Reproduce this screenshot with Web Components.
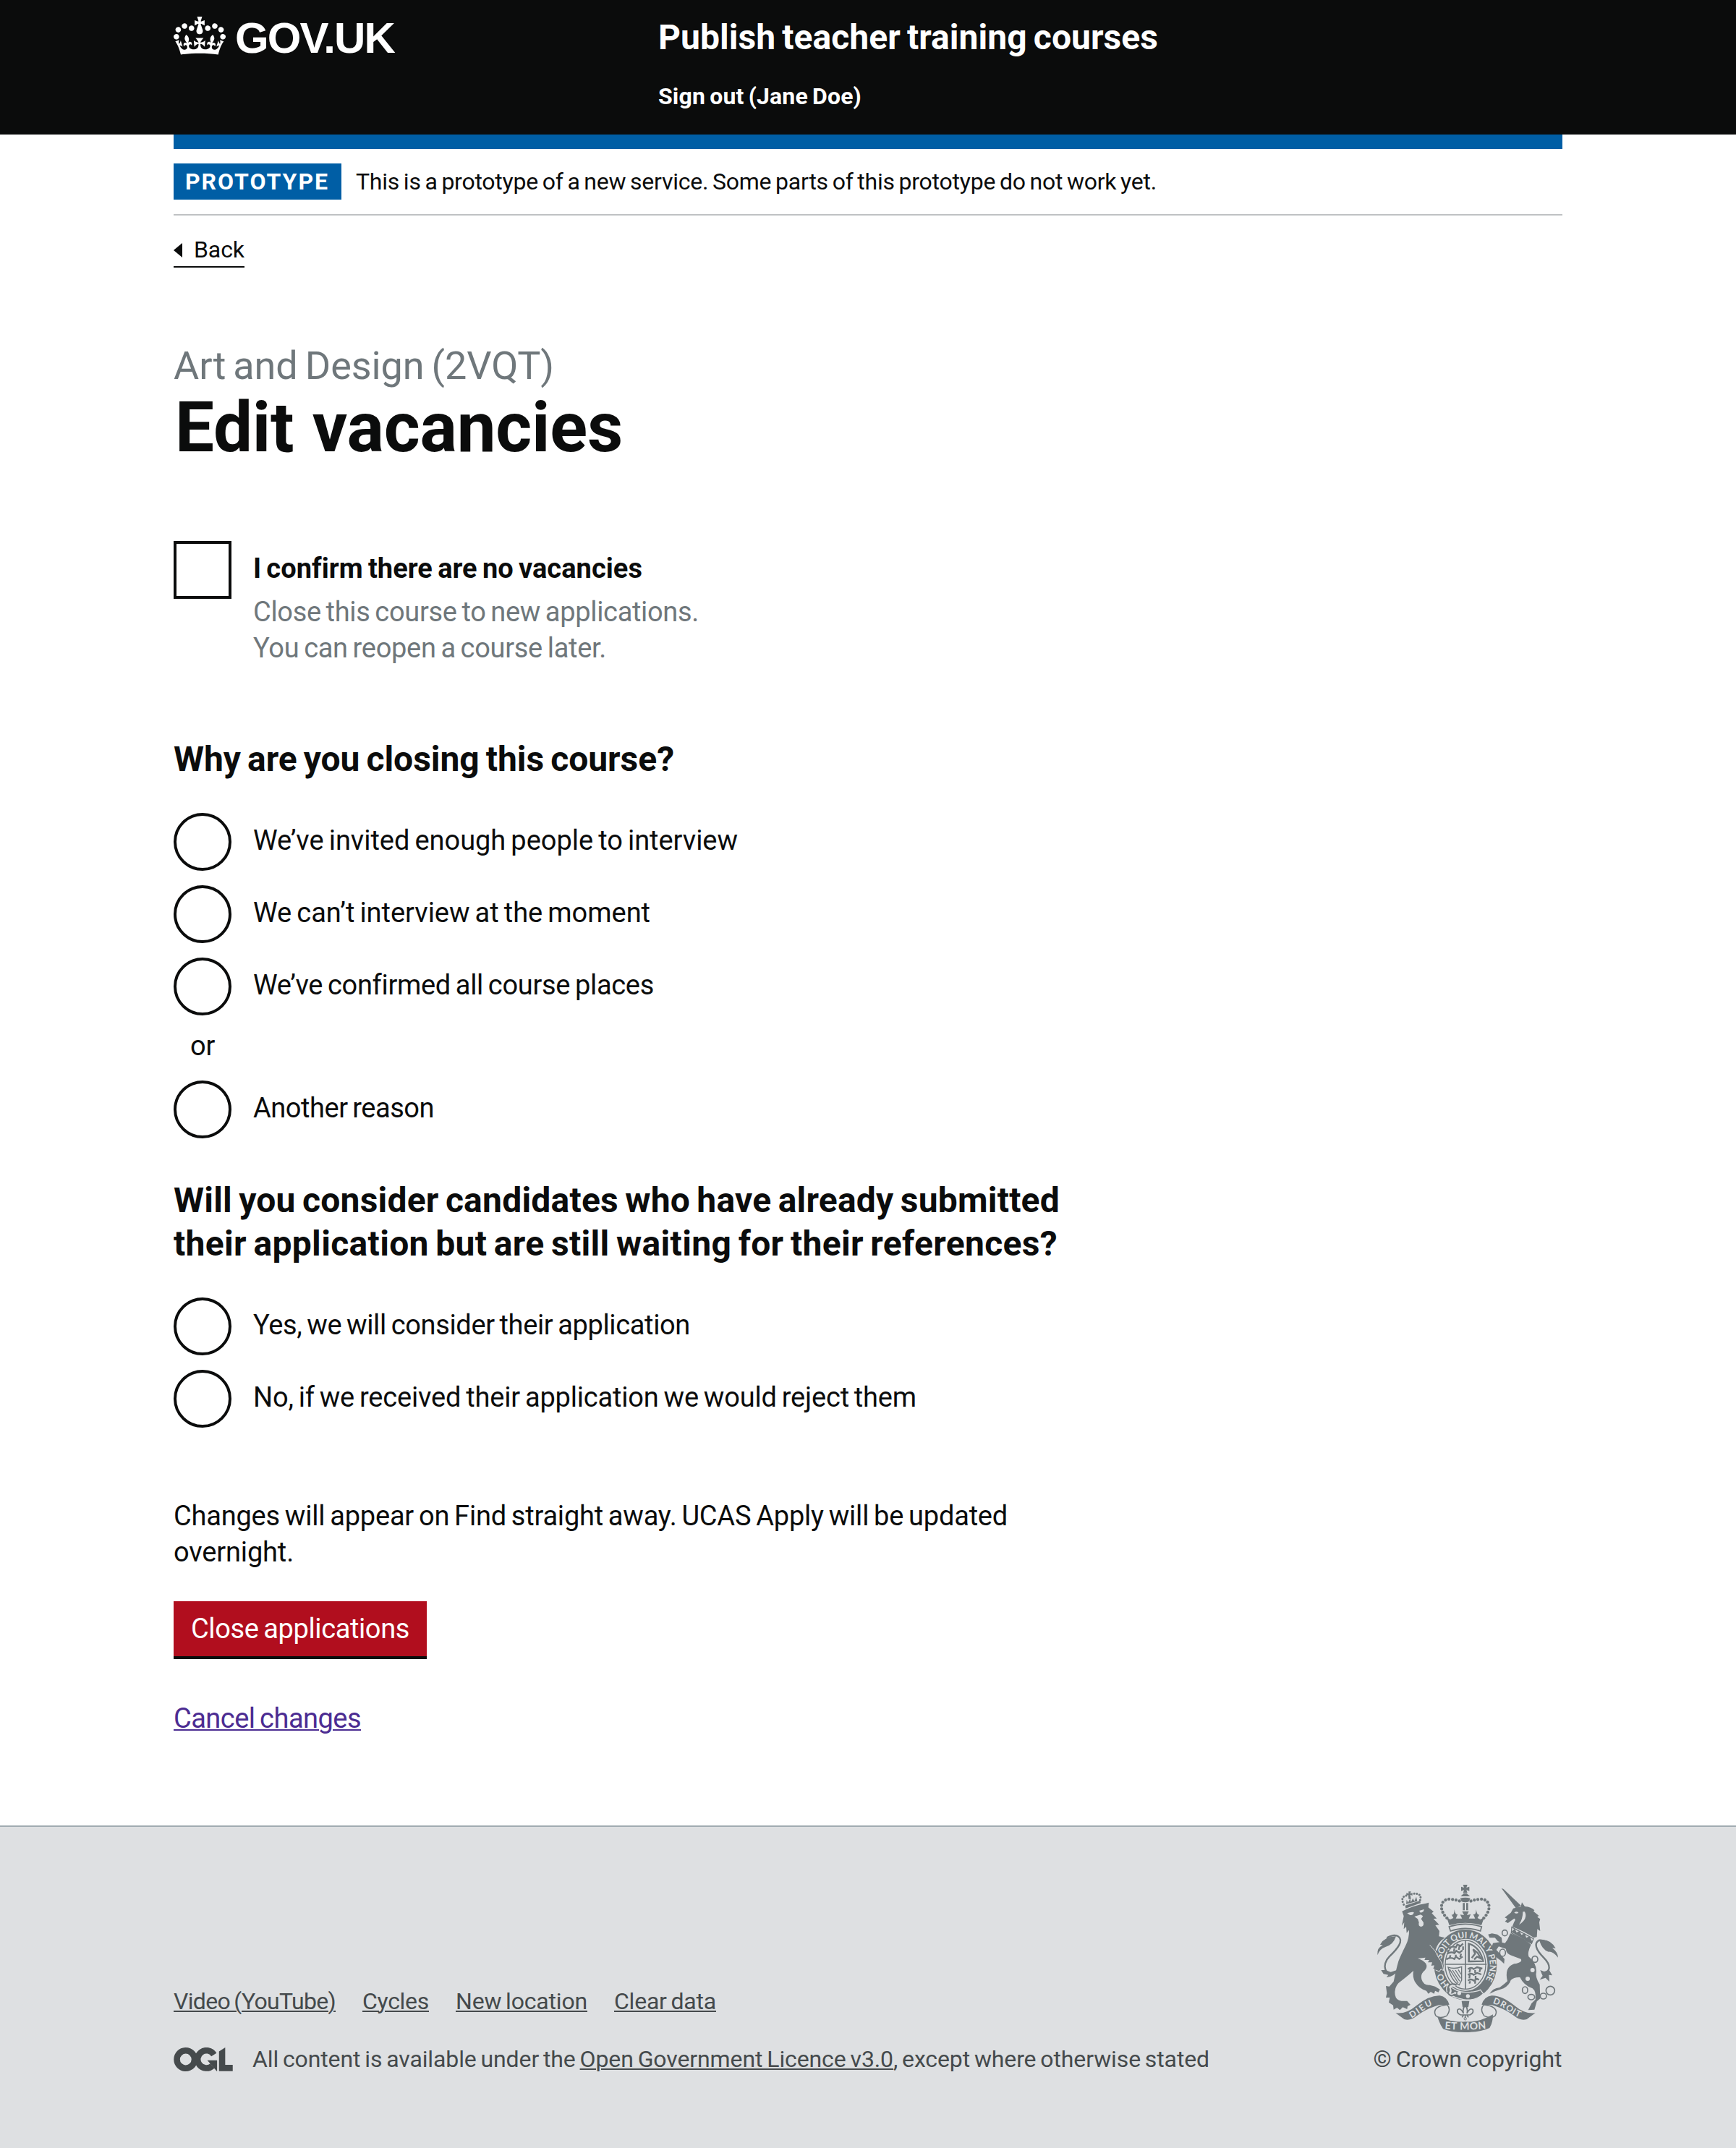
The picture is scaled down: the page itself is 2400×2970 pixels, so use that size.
<!DOCTYPE html>
<html lang="en">
<head>
<meta charset="utf-8">
<title>Edit vacancies</title>
<style>
html,body{margin:0;padding:0;background:#fff}
body{font-family:Roboto,"Liberation Sans",sans-serif;color:#0b0c0c;font-size:38px;line-height:50px}
</style>
</head>
<body>
<gv-page>
  <gv-header slot="header" service="Publish teacher training courses" user="Sign out (Jane Doe)"></gv-header>
  <gv-phase slot="main"></gv-phase>
  <gv-back slot="main"></gv-back>
  <gv-title slot="main"></gv-title>
  <gv-choice slot="main" class="check" kind="checkbox">
    <fit-text w="538" style="font-weight:700">I confirm there are no vacancies</fit-text>
    <fit-text slot="hint" w="616">Close this course to new applications.</fit-text>
    <fit-text slot="hint" w="488">You can reopen a course later.</fit-text>
  </gv-choice>
  <gv-question slot="main" style="margin-top:99px">
    <fit-text slot="legend" w="692">Why are you closing this course?</fit-text>
    <gv-choice><fit-text w="670">We’ve invited enough people to interview</fit-text></gv-choice>
    <gv-choice><fit-text w="549">We can’t interview at the moment</fit-text></gv-choice>
    <gv-choice><fit-text w="554">We’ve confirmed all course places</fit-text></gv-choice>
    <gv-divider><fit-text w="34">or</fit-text></gv-divider>
    <gv-choice><fit-text w="250">Another reason</fit-text></gv-choice>
  </gv-question>
  <gv-question slot="main" style="margin-top:56px">
    <fit-text slot="legend" w="1225">Will you consider candidates who have already submitted</fit-text>
    <fit-text slot="legend" w="1222">their application but are still waiting for their references?</fit-text>
    <gv-choice><fit-text w="604">Yes, we will consider their application</fit-text></gv-choice>
    <gv-choice><fit-text w="917">No, if we received their application we would reject them</fit-text></gv-choice>
  </gv-question>
  <gv-actions slot="main">
    <fit-text slot="note" w="1153">Changes will appear on Find straight away. UCAS Apply will be updated</fit-text>
    <fit-text slot="note" w="166">overnight.</fit-text>
    <fit-text slot="button" w="302">Close applications</fit-text>
    <fit-text slot="cancel" w="259">Cancel changes</fit-text>
  </gv-actions>
  <gv-footer slot="footer"></gv-footer>
</gv-page>
<script>
const define=(name,html,setup)=>customElements.define(name,class extends HTMLElement{
  connectedCallback(){
    if(this.shadowRoot)return;
    this.attachShadow({mode:'open'}).innerHTML=html;
    if(setup)setup(this,this.shadowRoot);
  }
});

define('gv-page',`<style>:host{display:block;background:#fff}main{padding:0 240px}</style>
<slot name="header"></slot><main><slot name="main"></slot></main><slot name="footer"></slot>`);

define('gv-header',`<style>
:host{display:flex;box-sizing:border-box;height:186px;background:#0b0c0c;color:#fff;padding:0 240px;font-weight:700}
.logo{display:flex;width:670px;flex:none}
svg{width:72px;height:53px;margin-top:23px;fill:#fff}
.word{font:700 60px/60px "Liberation Sans",Arial,sans-serif;margin:23px 0 0 13px}
.svc{font-size:48px;line-height:60px;padding-top:22px}
.user{font-size:32px;line-height:40px;margin-top:31px}
</style>
<div class="logo"><svg viewBox="0 0 132 97"><path d="M25 30.2c3.5 1.5 7.7-.2 9.1-3.7 1.5-3.6-.2-7.8-3.9-9.2-3.6-1.4-7.6.3-9.1 3.9-1.4 3.5.3 7.5 3.9 9zM9 39.5c3.6 1.5 7.8-.2 9.2-3.7 1.5-3.6-.2-7.8-3.9-9.1-3.6-1.5-7.6.2-9.1 3.8-1.4 3.5.3 7.5 3.8 9zM4.4 57.2c3.5 1.5 7.7-.2 9.1-3.8 1.5-3.6-.2-7.7-3.9-9.1-3.5-1.5-7.6.3-9.1 3.8-1.4 3.5.3 7.6 3.9 9.1zm38.3-21.4c3.5 1.5 7.7-.2 9.1-3.8 1.5-3.6-.2-7.7-3.9-9.1-3.6-1.5-7.6.3-9.1 3.8-1.3 3.6.4 7.7 3.9 9.1zm64.4-5.6c-3.6 1.5-7.8-.2-9.1-3.7-1.5-3.6.2-7.8 3.8-9.2 3.6-1.4 7.7.3 9.2 3.9 1.3 3.5-.4 7.5-3.9 9zm15.9 9.3c-3.6 1.5-7.7-.2-9.1-3.7-1.5-3.6.2-7.8 3.7-9.1 3.6-1.5 7.7.2 9.2 3.8 1.5 3.5-.3 7.5-3.8 9zm4.7 17.7c-3.6 1.5-7.8-.2-9.2-3.8-1.5-3.6.2-7.7 3.9-9.1 3.6-1.5 7.7.3 9.2 3.8 1.3 3.5-.4 7.6-3.9 9.1zM89.3 35.8c-3.6 1.5-7.8-.2-9.2-3.8-1.4-3.6.2-7.7 3.9-9.1 3.6-1.5 7.7.3 9.2 3.8 1.4 3.6-.3 7.7-3.9 9.1zM69.7 17.7l8.9 4.7V9.3l-8.9 2.8c-.2-.3-.5-.6-.9-.9L72.4 0H59.6l3.5 11.2c-.3.3-.6.5-.9.9l-8.8-2.8v13.1l8.8-4.7c.3.3.6.7.9.9l-5 15.4v.1c-.2.8-.4 1.6-.4 2.4 0 4.1 3.1 7.5 7 8.1h.2c.3 0 .7.1 1 .1.4 0 .7 0 1-.1h.2c4-.6 7.1-4.1 7.1-8.1 0-.8-.1-1.7-.4-2.4V34l-5.1-15.4c.4-.2.7-.6 1-.9zM66 92.8c16.9 0 32.8 1.1 47.1 3.2 4-16.9 8.9-26.7 14-33.5l-9.6-3.4c1 4.9 1.1 7.2 0 10.2-1.5-1.4-3-4.3-4.2-8.7L108.6 76c2.8-2 5-3.2 7.5-3.3-4.4 9.4-10 11.9-13.6 11.2-4.3-.8-6.3-4.6-5.6-7.9 1-4.7 5.7-5.9 8-.5 4.3-8.7-3-11.4-7.6-8.8 7.1-7.2 7.9-13.5 2.1-21.1-8 6.1-8.1 12.3-4.5 20.8-4.7-5.4-12.1-2.5-9.5 6.2 3.4-5.2 7.9-2 7.2 3.1-.6 4.3-6.4 7.8-13.5 7.2-10.3-.9-10.9-8-11.2-13.8 2.5-.5 7.1 1.8 11 7.3L80.2 60c-4.1 4.4-8 5.3-12.3 5.4 1.4-4.4 8-11.6 8-11.6H55.5s6.4 7.2 7.9 11.6c-4.2-.1-8-1-12.3-5.4l1.4 16.4c3.9-5.5 8.5-7.7 10.9-7.3-.3 5.8-.9 12.8-11.1 13.8-7.2.6-12.9-2.9-13.5-7.2-.7-5 3.8-8.3 7.1-3.1 2.7-8.7-4.6-11.6-9.4-6.2 3.7-8.5 3.6-14.7-4.6-20.8-5.8 7.6-5 13.9 2.2 21.1-4.7-2.6-11.9.1-7.7 8.8 2.3-5.5 7.1-4.2 8.1.5.7 3.3-1.3 7.1-5.7 7.9-3.5.7-9-1.8-13.5-11.2 2.5.1 4.7 1.3 7.5 3.3l-4.7-15.4c-1.2 4.4-2.7 7.2-4.3 8.7-1.1-3-.9-5.3 0-10.2l-9.5 3.4c5 6.9 9.9 16.7 14 33.5 14.8-2.1 30.8-3.2 47.7-3.2z"/></svg>
<div class="word"><fit-text w="220">GOV.UK</fit-text></div></div>
<div><div class="svc"><fit-text w="691" class="s"></fit-text></div><div class="user"><fit-text w="281" class="u"></fit-text></div></div>`,
(el,root)=>{
  root.querySelector('.s').textContent=el.getAttribute('service');
  root.querySelector('.u').textContent=el.getAttribute('user');
});

define('gv-phase',`<style>
:host{display:block;border-top:20px solid #005ea5;border-bottom:2px solid #bfc1c3}
.row{display:flex;gap:20px;padding:20px 0;font-size:32px;line-height:50px}
.tag{background:#005ea5;color:#fff;font-weight:700;width:216px;padding-left:16px}
</style><div class="row"><div class="tag"><fit-text w="199">PROTOTYPE</fit-text></div><fit-text w="1107">This is a prototype of a new service. Some parts of this prototype do not work yet.</fit-text></div>`);

define('gv-back',`<style>
:host{display:block;margin-top:27px}
a{display:flex;align-items:center;width:98px;box-sizing:border-box;height:45px;padding-bottom:3px;border-bottom:2px solid #0b0c0c;font-size:32px;line-height:40px}
i{width:0;height:0;border:solid transparent;border-width:10px 12px 10px 0;border-right-color:#0b0c0c;margin:2px 16px 0 0}
</style><a><i></i><fit-text w="70">Back</fit-text></a>`);

define('gv-title',`<style>
:host{display:block;margin-top:106px}
.cap{font-size:54px;line-height:60px;color:#6f777b;margin-bottom:5px}
h1{margin:0;padding-left:2px;font-size:96px;line-height:100px;font-weight:700}
h1 fit-text{word-spacing:.02em}
</style><div class="cap"><fit-text w="526">Art and Design (2VQT)</fit-text></div><h1><fit-text w="619">Edit vacancies</fit-text></h1>`);

define('gv-choice',`<style>
:host{display:flex;gap:30px}
:host(.check){margin-top:107px}
.box{box-sizing:border-box;flex:none;width:80px;height:80px;border:4px solid #0b0c0c;border-radius:50%}
:host([kind=checkbox]) .box{border-radius:0}
.label{padding-top:13px}
.hint{color:#6f777b;margin-top:10px}
:host(:not([kind])) .hint{display:none}
</style><span class="box"></span><div class="label"><slot></slot><div class="hint"><slot name="hint"></slot></div></div>`);

define('gv-divider',`<style>:host{display:flex;justify-content:center;width:80px;margin:-3px 0 3px}</style><slot></slot>`);

define('gv-question',`<style>
:host{display:block}
.legend{font-size:48px;line-height:60px;font-weight:700;margin-bottom:44px}
.items{display:flex;flex-direction:column;gap:20px}
</style><div class="legend"><slot name="legend"></slot></div><div class="items"><slot></slot></div>`);

define('gv-actions',`<style>
:host{display:block;margin-top:97px;padding-bottom:123px}
.btn{display:flex;justify-content:center;box-sizing:border-box;width:350px;height:80px;padding-top:13px;margin:43px 0 57px;background:#b10e1e;color:#fff;border-bottom:4px solid #0b0c0c}
.cancel{color:#4c2c92;text-decoration:underline 2px;text-underline-offset:2px}
</style><div><slot name="note"></slot></div><div class="btn"><slot name="button"></slot></div><div class="cancel"><slot name="cancel"></slot></div>`);

define('gv-crest',`<style>:host{display:block;width:250px;height:204px}svg{display:block;width:250px;height:204px;overflow:visible}text{font:700 36px Lato,Roboto,sans-serif;fill:#dee0e2}</style>
<svg viewBox="72 48 750 612" fill="#6f777b" stroke="none">
<defs><path id="ring" d="M438 491C385 491 337 442 337 380C337 318 385 269 438 269C491 269 539 318 539 380C539 442 491 491 438 491"/>
<path id="dieu" d="M214 602Q250 580 276 560Q298 546 324 542"/><path id="mon" d="M352 646Q437 654 530 644"/><path id="droit" d="M550 540Q575 545 610 568Q640 592 680 606"/></defs>
<!-- lion -->
<path d="M175 158Q225 133 272 126L286 122L284 142L306 160L298 166L319 188L305 189L329 214L313 216L330 240L328 262L352 268Q322 288 314 318Q334 345 347 380L349 404L336 400L330 408L318 404L314 396L304 396L310 382L296 384L300 370L282 370L288 360L268 360L272 350L240 354Q262 360 274 375Q284 392 262 410Q252 420 256 440Q264 466 290 464L312 470L332 482L326 494L312 488L308 500L294 492L284 500L276 488Q246 480 228 450Q218 430 222 405Q200 425 160 456Q142 475 146 505Q150 528 172 530L196 530L210 546L198 552L196 564L178 556L166 568L154 558L140 566L138 548L120 536L124 516L108 516L112 498L108 468L122 470L140 450Q150 400 160 365Q170 340 190 300Q205 270 204 236L194 248L192 222L182 232L184 204L174 218L182 178Z"/>
<path d="M196 166Q212 160 224 162Q222 176 208 174ZM246 156L266 150Q266 162 252 164ZM226 180L252 172L262 178L254 190L264 205Q266 222 253 222Q241 220 245 204L240 190Z" fill="#dee0e2"/>
<path d="M148 412C104 432 88 380 122 346C158 312 182 280 160 263C148 254 128 258 112 268" fill="none" stroke="#6f777b" stroke-width="7"/>
<path d="M73 340Q70 308 95 300L84 296Q104 262 150 262Q138 298 106 306Q82 314 73 340ZM88 402L106 402L128 410L160 400Q140 432 110 432L118 422L98 418Z"/>
<path d="M188 134L250 114L252 124L190 146Z"/><path d="M182 130Q165 96 198 92M250 112Q260 80 215 86" fill="none" stroke="#6f777b" stroke-width="9" stroke-linecap="round" stroke-dasharray="0.1 11.5"/>
<path d="M202 76h10l-3 9 9-3v11l-9-4 3 18h-10l-1-17-8 3V82l9 3zM192 128l2-18 6 12 8-16 4 14 8-16 6 12 8-18 4 18z"/>
<!-- crown -->
<path d="M428 48h18l-4 12 12-4v18l-12-4 4 12h-18l4-12-12 4V56l12 4zM431 84h12l14 12h-39zM416 104q21-6 42 0l-6 14q-15 6-30 0zM427 124h8v30h-8zM441 124h8v30h-8z"/>
<path d="M361 186C322 146 338 104 376 108C398 110 412 114 424 120M514 186C552 146 536 104 498 108C476 110 462 114 450 120" fill="none" stroke="#6f777b" stroke-width="12.5" stroke-linecap="round" stroke-dasharray="0.1 14.5"/>
<path d="M360 183L374 192L388 186L380 172Q392 176 392 150Q396 176 406 170L398 188L424 188L416 172L432 174L424 158H452L444 174L460 170L452 188L478 188L470 170Q482 176 482 150Q486 176 496 172L488 186L500 192L516 183L504 216Q437 196 371 216Z"/>
<path d="M370 222Q437 200 505 222L500 240Q437 218 376 240Z" fill="none" stroke="#6f777b" stroke-width="5"/>
<!-- garter and shield -->
<ellipse cx="438" cy="380" rx="111" ry="127" fill="none" stroke="#6f777b" stroke-width="38"/>
<ellipse cx="438" cy="380" rx="84" ry="101" fill="none" stroke="#6f777b" stroke-width="4"/>
<path d="M438 278V482M352 378H526" stroke="#6f777b" stroke-width="5"/>
<path d="M448 370V288Q500 300 516 368ZM456 362H508Q492 310 456 298Z" fill-rule="evenodd"/>
<path d="M368 312q14-12 30-4l6-12 14 6 10-10M362 334q16-10 30-2l8-10 12 8 14-10M358 358q18-12 34-2l6-10 14 10 14-10M368 318l-4 10M392 312l-2 14M414 300l-4 18M428 304v14M376 340l-4 12M398 338v12M420 334l-4 14M464 352l14-18-8-18 18 14 14 24-16-8-12 12M448 398q14-10 24 0l14-8 22 6M448 422q14-10 24 0l14-8 18 6M448 446q14-10 24 0l14-8 8 4M458 398l-4 14M478 402v12M500 394l-4 16M456 422l-2 14M480 426v12M458 448l-4 10M478 444v14" fill="none" stroke="#6f777b" stroke-width="7"/>
<path d="M366 390Q392 400 422 388V444L412 464Q380 448 366 390ZM372 398L408 456M384 402L414 448M396 402L418 436M408 400L420 420" fill="none" stroke="#6f777b" stroke-width="4"/>
<text style="letter-spacing:-.8px"><textPath href="#ring" startOffset="76">HO<tspan dx="58">SOIT QUI MAL Y PENSE</tspan></textPath></text>
<path d="M366 462Q400 494 438 494Q478 494 500 484L512 500Q480 532 430 524Q390 516 366 500Q352 480 366 462Z" stroke="#dee0e2" stroke-width="4"/>
<path d="M396 470Q370 460 374 480Q380 490 372 500Q384 510 398 494" fill="none" stroke="#dee0e2" stroke-width="8"/><path d="M402 464Q374 452 366 474Q376 486 364 496Q376 516 394 502" fill="none" stroke="#6f777b" stroke-width="6"/>
<circle cx="412" cy="498" r="8" fill="#dee0e2"/><circle cx="448" cy="510" r="8" fill="#dee0e2"/>
<path d="M290 298Q316 322 326 350Q344 372 347 404L336 398L330 408L314 402" fill="#6f777b" stroke="#dee0e2" stroke-width="3"/>
<!-- pendant -->
<path d="M422 530H454L450 556H426Z"/>
<path d="M437 548Q450 562 444 582Q456 556 468 566Q474 580 456 588H418Q400 580 406 566Q418 556 430 582Q424 562 437 548ZM430 588L424 598M444 588L450 598M437 590V600" fill="none" stroke="#6f777b" stroke-width="5"/><circle cx="437" cy="604" r="5" fill="none" stroke="#6f777b" stroke-width="3"/>
<!-- ribbons -->
<path d="M148 580Q192 586 234 550Q288 506 332 508Q360 512 371 545L354 548Q335 542 312 552Q270 566 236 592Q210 614 184 606Z"/>
<path d="M728 580Q684 586 642 550Q588 506 546 508Q516 512 505 545L522 548Q541 542 564 552Q606 566 640 592Q666 614 692 606Z"/>
<path d="M360 546C330 550 300 560 314 590Q330 606 360 592C376 570 372 556 362 546M516 546C546 550 576 560 562 590Q546 606 516 592C500 570 504 556 514 546" fill="none" stroke="#6f777b" stroke-width="4.5"/>
<path d="M322 594Q380 620 437 616Q496 620 552 586Q552 620 538 642Q500 660 437 660Q372 660 345 646Q328 620 322 594Z"/>
<text style="letter-spacing:6px"><textPath href="#dieu">DIEU</textPath></text>
<text style="font-size:42px;letter-spacing:1.500px"><textPath href="#mon">ET MON</textPath></text>
<text style="letter-spacing:3.500px"><textPath href="#droit">DROIT</textPath></text>
<!-- unicorn -->
<path d="M587 62L596 66L668 134L648 146Z"/>
<path d="M601 184L626 164L636 146L668 138L672 121L684 138Q712 140 724 154L720 158L742 176L736 182L748 190L744 204L748 240L736 232L734 264L722 268Q680 240 632 222L640 202Q648 190 640 188L614 207L602 200L612 190Z"/>
<path d="M640 164q10-8 18 0-8 6-18 0M684 160q14 30-24 54 16-24 16-54z" fill="#dee0e2"/>
<path d="M630 224L720 272L712 292L628 248Z" fill="#dee0e2" stroke="#6f777b" stroke-width="4"/><path d="M628 244L642 230L650 246L662 240L670 256L684 250L690 268L704 262L716 286L708 290Z"/>
<path d="M624 250Q680 270 710 296Q694 330 700 346Q732 372 732 408Q726 430 746 462L748 520L734 532L724 566L698 568L712 540L728 524Q732 490 716 478Q680 466 664 432Q640 430 626 444Q620 464 596 478L560 490L538 500Q550 478 580 474Q600 460 612 448Q598 390 640 376Q676 370 668 356L636 344Q604 334 606 314L576 304L566 318L584 338L600 356L598 376L584 362L564 348L546 310L552 290L580 286L602 290L612 276ZM532 254L548 250L570 254L588 268L590 290L572 282L560 268L538 268Z"/>
<path d="M754 412C796 414 792 380 762 350C730 318 720 290 744 278Q760 276 776 286" fill="none" stroke="#6f777b" stroke-width="7"/>
<path d="M744 278Q790 270 812 312L798 310Q822 330 822 350Q800 324 782 326Q756 318 744 278ZM748 402L770 410L784 400L798 424L784 422L786 450L770 434L746 442L758 426Z"/>
<g fill="#dee0e2"><circle cx="716" cy="402" r="9"/><circle cx="696" cy="438" r="9"/></g>
<g fill="#dee0e2" stroke="#6f777b" stroke-width="5"><ellipse cx="601" cy="248" rx="11" ry="12"/><ellipse cx="592" cy="330" rx="12" ry="15"/><ellipse cx="726" cy="357" rx="12" ry="13"/><ellipse cx="685" cy="485" rx="11" ry="14"/><ellipse cx="711" cy="514" rx="14" ry="11"/><ellipse cx="761" cy="510" rx="13" ry="12"/><circle cx="790" cy="487" r="18"/></g>
</svg>`);

define('gv-footer',`<style>
:host{display:flex;justify-content:space-between;align-items:flex-end;box-sizing:border-box;height:446px;padding:0 240px 103px;border-top:2px solid #a1acb2;background:#dee0e2;color:#454a4c;font-size:32px;line-height:40px}
.links{display:flex;gap:37px;margin-bottom:40px}
.links fit-text,u{text-decoration:underline 2px;text-underline-offset:2px}
.lic{display:flex;align-items:center;white-space:pre}
.lic svg{width:82px;height:33px;margin-right:27px}
.copy{display:flex;flex-direction:column;align-items:center;width:262px}
gv-crest{margin-bottom:17px}
</style>
<div><div class="links"><fit-text w="224">Video (YouTube)</fit-text><fit-text w="92">Cycles</fit-text><fit-text w="182">New location</fit-text><fit-text w="141">Clear data</fit-text></div>
<div class="lic"><svg viewBox="0 0 483.2 195.7"><g fill="none" stroke="#454a4c" stroke-width="50.7"><circle cx="97.8" cy="97.8" r="72.4"/><path d="M329 58.7A72.4 72.4 0 1 0 316 151"/></g><path d="M421.5.1V142.8h61.7v50.7H370.8V32.4zM275 106h80v87.8h-3l-19.400-22.200-33.300-38.100z" fill="#454a4c"/></svg><fit-text w="452.600">All content is available under the </fit-text><fit-text w="433.400"><u>Open Government Licence v3.0</u></fit-text><fit-text w="437">, except where otherwise stated</fit-text></div></div>
<div class="copy"><gv-crest></gv-crest><fit-text w="261">© Crown copyright</fit-text></div>`);

/* Sets a single line of text to the width given in "w" by adjusting its tracking. */
customElements.define('fit-text',class extends HTMLElement{
  connectedCallback(){
    if(!this.shadowRoot)this.attachShadow({mode:'open'}).innerHTML='<style>:host{display:block;width:max-content;white-space:pre;word-spacing:-.06em;font-kerning:normal;font-variant-ligatures:none}</style><slot></slot>';
    const n=this.textContent.length,w=this.getBoundingClientRect().width;
    if(n&&w)this.style.letterSpacing=((+this.getAttribute('w')-w)/n).toFixed(3)+'px';
  }
});
</script>
</body>
</html>
